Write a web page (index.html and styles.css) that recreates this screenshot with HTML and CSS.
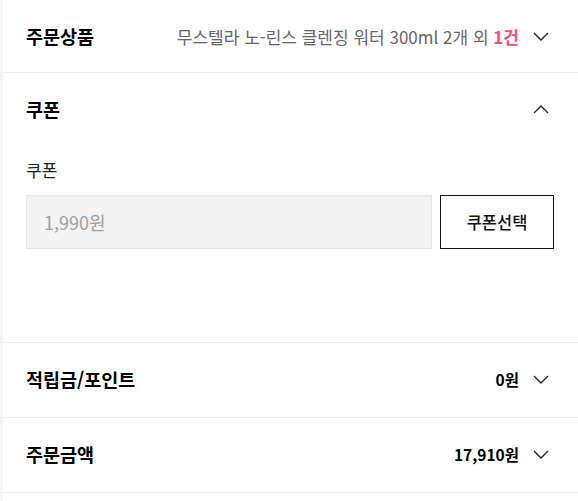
FILE: index.html
```html
<!DOCTYPE html>
<html lang="ko">
<head>
<meta charset="utf-8">
<link rel="stylesheet" href="styles.css">
</head>
<body>
<div class="panel">
  <div class="row row-first">
    <h2 class="title">주문상품</h2>
    <div class="right">
      <span class="summary">무스텔라 노-린스 클렌징 워터 300ml 2개 외 <b class="count">1건</b></span>
      <svg class="chev" width="16" height="9" viewBox="0 0 16 9"><path d="M1 1 L8 8 L15 1" fill="none" stroke="#222" stroke-width="1.4"/></svg>
    </div>
  </div>
  <div class="section">
    <div class="row row-head">
      <h2 class="title">쿠폰</h2>
      <svg class="chev" width="16" height="9" viewBox="0 0 16 9"><path d="M1 8 L8 1 L15 8" fill="none" stroke="#222" stroke-width="1.4"/></svg>
    </div>
    <div class="coupon-body">
      <div class="label">쿠폰</div>
      <div class="coupon-line">
        <div class="coupon-input">1,990원</div>
        <button class="coupon-btn">쿠폰선택</button>
      </div>
    </div>
  </div>
  <div class="row row-std">
    <h2 class="title">적립금/포인트</h2>
    <div class="right">
      <span class="amount">0원</span>
      <svg class="chev" width="16" height="9" viewBox="0 0 16 9"><path d="M1 1 L8 8 L15 1" fill="none" stroke="#222" stroke-width="1.4"/></svg>
    </div>
  </div>
  <div class="row row-std">
    <h2 class="title">주문금액</h2>
    <div class="right">
      <span class="amount">17,910원</span>
      <svg class="chev" width="16" height="9" viewBox="0 0 16 9"><path d="M1 1 L8 8 L15 1" fill="none" stroke="#222" stroke-width="1.4"/></svg>
    </div>
  </div>
</div>
</body>
</html>
```
FILE: styles.css
```css
html, body {
  margin: 0;
  padding: 0;
}
body {
  background: #f4f4f4;
  font-family: "Noto Sans CJK KR", "Noto Sans", sans-serif;
  color: #111;
}
.panel {
  margin-left: 3px;
  background: #fff;
  min-height: 501px;
}
.row {
  display: flex;
  align-items: center;
  justify-content: space-between;
  padding: 0 29px 0 23px;
  border-bottom: 1px solid #eeeeee;
}
.row-first { height: 72px; }
.row-std {
  height: 74px;
  padding-bottom: 2px;
  box-sizing: border-box;
  height: 75px;
}
.row-head {
  height: 72px;
  border-bottom: none;
}
.title {
  margin: 0;
  font-size: 18.5px;
  font-weight: 700;
  color: #000;
}
.right {
  display: flex;
  align-items: center;
  gap: 14px;
}
.summary {
  font-size: 17px;
  color: #666;
}
.count {
  color: #ff4b6e;
  font-weight: 700;
}
.amount {
  font-size: 15.5px;
  font-weight: 700;
  color: #000;
}
.chev {
  display: block;
}
.section {
  border-bottom: 1px solid #eeeeee;
}
.coupon-body {
  padding: 15px 24px 93px 23px;
}
.label {
  font-size: 17px;
  line-height: 20px;
  color: #222;
  margin-bottom: 15px;
}
.coupon-line {
  display: flex;
  gap: 8px;
}
.coupon-input {
  flex: 1;
  height: 54px;
  box-sizing: border-box;
  background: #f4f4f4;
  border: 1px solid #e6e6e6;
  padding-left: 17px;
  display: flex;
  align-items: center;
  font-size: 18px;
  color: #a0a0a0;
}
.coupon-btn {
  width: 114px;
  height: 54px;
  box-sizing: border-box;
  background: #fff;
  border: 1px solid #111;
  font-family: inherit;
  font-size: 16.5px;
  font-weight: 500;
  color: #111;
  padding: 0;
}
```
